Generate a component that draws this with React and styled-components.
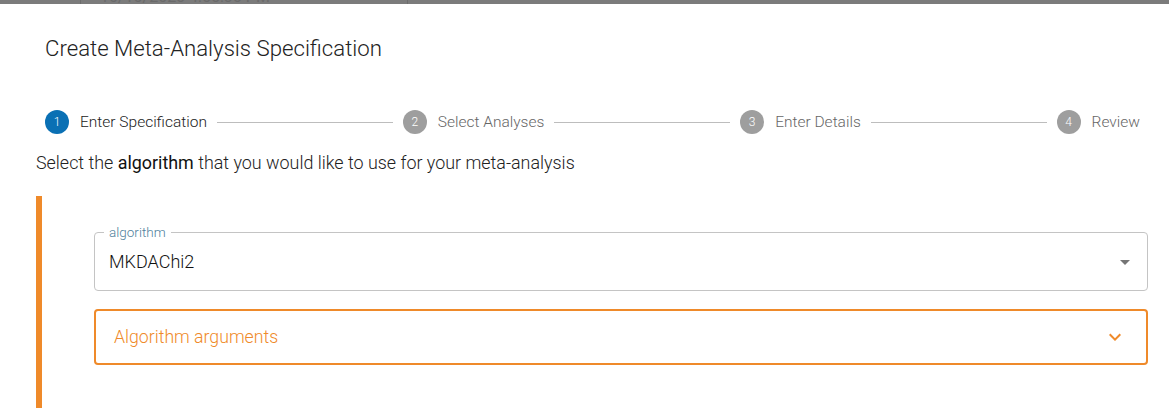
import styled, { createGlobalStyle } from "styled-components";

const Global = createGlobalStyle`
  html, body { margin: 0; padding: 0; background: #fff; }
  body { font-family: Roboto, "Liberation Sans", sans-serif; }
  * { box-sizing: border-box; }
`;

const ORANGE = "#ef8a2a";

const steps = ["Enter Specification", "Select Analyses", "Enter Details", "Review"];

const Page = styled.div`
  width: 1169px;
  height: 408px;
  overflow: hidden;
  background: #fff;
`;

// the dimmed table that shows behind the dialog
const Backdrop = styled.div`
  height: 4px;
  overflow: hidden;
  background: #7b7b7b;
  display: flex;
`;

const BackCell = styled.div`
  height: 4px;
  width: ${(p) => p.w}px;
  border-right: ${(p) => (p.line ? "1px solid #6c6c6c" : "none")};
  display: flex;
  align-items: flex-end;
  padding-left: ${(p) => p.pad || 0}px;
  font-size: 16px;
  line-height: 14px;
  color: #6a6a6a;
  white-space: nowrap;
`;

const Dialog = styled.div`
  padding: 0 21px 0 36px;
`;

const Title = styled.h2`
  margin: 28px 0 0 9px;
  font-size: 22.2px;
  line-height: 32px;
  font-weight: 300;
  color: #222;
`;

const Stepper = styled.div`
  margin: 46px 8px 0 9px;
  display: flex;
  align-items: center;
  height: 24px;
`;

const Step = styled.div`
  display: flex;
  align-items: center;
  gap: 11px;
`;

const Circle = styled.span`
  width: 24px;
  height: 24px;
  border-radius: 50%;
  background: ${(p) => (p.active ? "#0a70b4" : "#9e9e9e")};
  color: #fff;
  font-size: 12px;
  font-weight: 300;
  display: flex;
  align-items: center;
  justify-content: center;
`;

const StepLabel = styled.span`
  font-size: 15.5px;
  font-weight: 300;
  color: ${(p) => (p.active ? "#222" : "#666")};
`;

const Connector = styled.span`
  flex: 1;
  margin: 0 10px;
  border-top: 1px solid #bdbdbd;
`;

const Instruction = styled.p`
  margin: 17px 0 0;
  font-size: 17.9px;
  line-height: 24px;
  font-weight: 300;
  color: #222;

  b {
    font-weight: 400;
    color: #111;
  }
`;

const Section = styled.div`
  margin-top: 21px;
  border-left: 6px solid ${ORANGE};
  padding: 36px 0 60px 52px;
  display: flex;
  flex-direction: column;
  gap: 18px;
`;

const SelectBox = styled.div`
  position: relative;
  height: 59px;
  border: 1px solid #c4c4c4;
  border-radius: 4px;
  display: flex;
  align-items: center;
  justify-content: space-between;
  padding: 0 10px 0 14px;
  font-size: 18px;
  font-weight: 300;
  color: #111;
`;

const FloatLabel = styled.span`
  position: absolute;
  left: 9px;
  top: -9px;
  padding: 0 5px;
  background: #fff;
  font-size: 13.5px;
  font-weight: 300;
  line-height: 16px;
  color: #4f7f9c;
`;

const AccordionBox = styled.div`
  height: 56px;
  border: 2px solid ${ORANGE};
  border-radius: 4px;
  display: flex;
  align-items: center;
  justify-content: space-between;
  padding: 0 19px 0 18px;
  font-size: 17.7px;
  font-weight: 300;
  color: ${ORANGE};
`;

const Icon = styled.svg`
  width: 24px;
  height: 24px;
  fill: ${(p) => p.color};
  flex-shrink: 0;
`;

export default function App() {
  return (
    <Page>
      <Global />
      <Backdrop>
        <BackCell w={81} line />
        <BackCell w={327} line pad={19}>10/10/2023 4:55:35 PM</BackCell>
      </Backdrop>
      <Dialog>
        <Title>Create Meta-Analysis Specification</Title>
        <Stepper>
          {steps.map((s, i) => (
            <>
              {i > 0 && <Connector key={"c" + i} />}
              <Step key={s}>
                <Circle active={i === 0}>{i + 1}</Circle>
                <StepLabel active={i === 0}>{s}</StepLabel>
              </Step>
            </>
          ))}
        </Stepper>
        <Instruction>
          Select the <b>algorithm</b> that you would like to use for your meta-analysis
        </Instruction>
        <Section>
          <SelectBox>
            <FloatLabel>algorithm</FloatLabel>
            <span>MKDAChi2</span>
            <Icon viewBox="0 0 24 24" color="#757575">
              <path d="M7 10l5 5 5-5z" />
            </Icon>
          </SelectBox>
          <AccordionBox>
            <span>Algorithm arguments</span>
            <Icon viewBox="0 0 24 24" color={ORANGE}>
              <path d="M16.59 8.59 12 13.17 7.41 8.59 6 10l6 6 6-6z" />
            </Icon>
          </AccordionBox>
        </Section>
      </Dialog>
    </Page>
  );
}
